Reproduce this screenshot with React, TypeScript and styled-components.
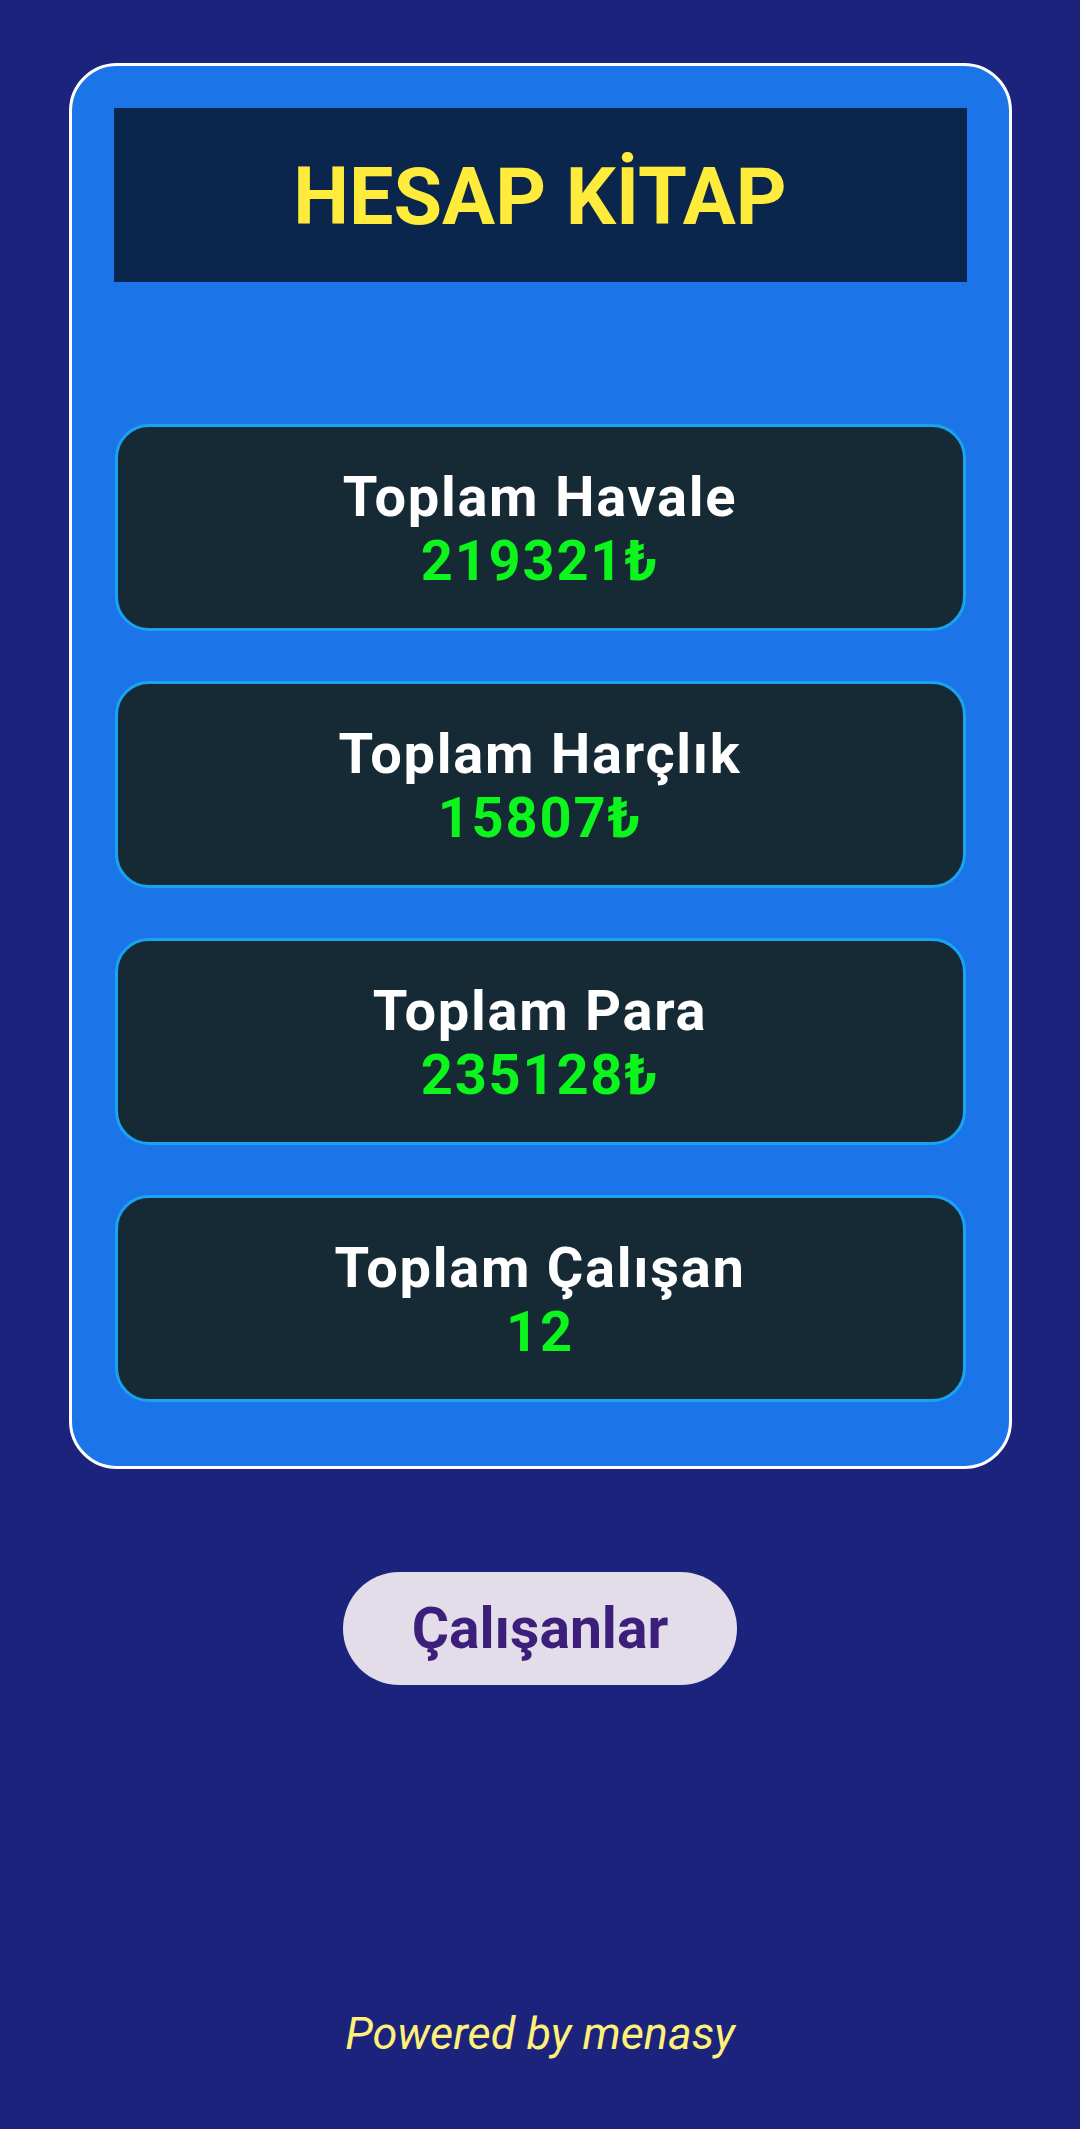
import styled, { createGlobalStyle } from "styled-components";

type Stat = {
  label: string;
  value: string;
};

const stats: Stat[] = [
  { label: "Toplam Havale", value: "219321₺" },
  { label: "Toplam Harçlık", value: "15807₺" },
  { label: "Toplam Para", value: "235128₺" },
  { label: "Toplam Çalışan", value: "12" },
];

export default function App() {
  return (
    <>
      <GlobalStyle />
      <Page>
        <Board>
          <Header>
            <Title>HESAP KİTAP</Title>
          </Header>
          <StatList>
            {stats.map(stat => (
              <StatCard key={stat.label}>
                <StatLabel>{stat.label}</StatLabel>
                <StatValue>{stat.value}</StatValue>
              </StatCard>
            ))}
          </StatList>
        </Board>
        <PillButton type="button">Çalışanlar</PillButton>
        <Footer>Powered by menasy</Footer>
      </Page>
    </>
  );
}

const GlobalStyle = createGlobalStyle`
  html, body {
    margin: 0;
    padding: 0;
    background: #1b237d;
  }

  body {
    font-family: Roboto, "Noto Sans", "Liberation Sans", sans-serif;
  }
`;

const Page = styled.main`
  min-height: 2129px;
  box-sizing: border-box;
  padding-top: 63px;

  display: flex;
  flex-direction: column;
  align-items: center;
`;

const Board = styled.section`
  width: 943px;
  box-sizing: border-box;
  padding: 42px 42px 64px;

  background: #1c75e8;
  border: 3px solid #ffffff;
  border-radius: 48px;

  display: flex;
  flex-direction: column;
  gap: 142px;
`;

const Header = styled.header`
  height: 174px;
  background: #0a264d;

  display: flex;
  align-items: center;
  justify-content: center;
`;

const Title = styled.h1`
  margin: 0;
  padding-top: 4px;
  color: #ffeb3b;
  font-size: 79px;
  font-weight: 700;
`;

const StatList = styled.div`
  padding: 0 1px;

  display: flex;
  flex-direction: column;
  gap: 50px;
`;

const StatCard = styled.article`
  height: 207px;
  box-sizing: border-box;

  background: #152a35;
  border: 3px solid #1aa3f0;
  border-radius: 34px;

  display: flex;
  flex-direction: column;
  align-items: center;
  justify-content: center;
  padding-top: 2px;
`;

const StatLabel = styled.div`
  color: #ffffff;
  font-size: 56px;
  font-weight: 700;
  letter-spacing: 1.7px;
  line-height: 64px;
`;

const StatValue = styled.div`
  color: #0cf51c;
  font-size: 56px;
  font-weight: 700;
  letter-spacing: 1.8px;
  line-height: 64px;
`;

const PillButton = styled.button`
  margin-top: 103px;
  width: 394px;
  height: 113px;
  border: none;
  border-radius: 57px;

  background: #e3dde9;
  color: #3c1f7a;
  font-family: Roboto, "Noto Sans", sans-serif;
  font-size: 57px;
  font-weight: 700;
  cursor: pointer;
`;

const Footer = styled.footer`
  margin-top: 322px;
  color: #fff07a;
  font-size: 45px;
  font-style: italic;
`;
